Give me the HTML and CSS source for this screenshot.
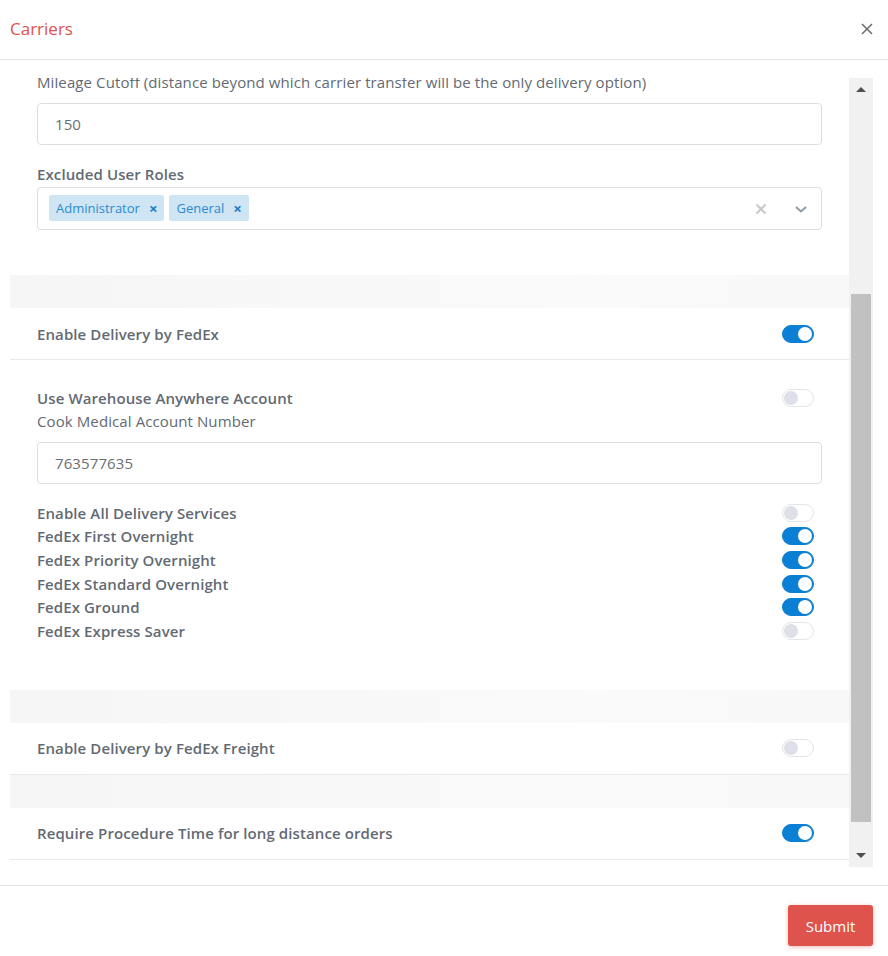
FILE: index.html
```html
<!DOCTYPE html>
<html>
<head>
<meta charset="utf-8">
<link rel="stylesheet" href="styles.css">
</head>
<body>
<div class="modal">
  <div class="modal-header">
    <h1 class="modal-title">Carriers</h1>
    <svg class="close-icon" width="12" height="12" viewBox="0 0 12 12"><path d="M1 1L11 11M11 1L1 11" stroke="#6b6b6b" stroke-width="1.5" fill="none"/></svg>
  </div>
  <div class="modal-body">
    <div class="scroll-view">
      <div class="scroll-content">
        <div class="section section-top">
          <div class="field-label">Mileage Cutoff (distance beyond which carrier transfer will be the only delivery option)</div>
          <div class="text-input">150</div>
          <div class="field-label bold spaced">Excluded User Roles</div>
          <div class="multi-select">
            <div class="tags">
              <span class="tag">Administrator <span class="tag-x">×</span></span>
              <span class="tag">General <span class="tag-x">×</span></span>
            </div>
            <div class="select-icons">
              <svg width="12" height="12" viewBox="0 0 12 12"><path d="M1.5 1.5L10.5 10.5M10.5 1.5L1.5 10.5" stroke="#c8c8c8" stroke-width="2" fill="none"/></svg>
              <svg width="14" height="10" viewBox="0 0 14 10"><path d="M2 3L7 7.5L12 3" stroke="#8d9ba6" stroke-width="2" fill="none"/></svg>
            </div>
          </div>
        </div>
        <div class="band"></div>
        <div class="row">
          <span class="row-label">Enable Delivery by FedEx</span>
          <span class="toggle on"></span>
        </div>
        <div class="section section-fedex">
          <div class="line">
            <span class="field-label bold">Use Warehouse Anywhere Account</span>
            <span class="toggle"></span>
          </div>
          <div class="field-label">Cook Medical Account Number</div>
          <div class="text-input">763577635</div>
          <div class="services">
            <div class="line"><span class="field-label bold">Enable All Delivery Services</span><span class="toggle"></span></div>
            <div class="line"><span class="field-label bold">FedEx First Overnight</span><span class="toggle on"></span></div>
            <div class="line"><span class="field-label bold">FedEx Priority Overnight</span><span class="toggle on"></span></div>
            <div class="line"><span class="field-label bold">FedEx Standard Overnight</span><span class="toggle on"></span></div>
            <div class="line"><span class="field-label bold">FedEx Ground</span><span class="toggle on"></span></div>
            <div class="line"><span class="field-label bold">FedEx Express Saver</span><span class="toggle"></span></div>
          </div>
        </div>
        <div class="band"></div>
        <div class="row">
          <span class="row-label">Enable Delivery by FedEx Freight</span>
          <span class="toggle"></span>
        </div>
        <div class="band"></div>
        <div class="row">
          <span class="row-label">Require Procedure Time for long distance orders</span>
          <span class="toggle on"></span>
        </div>
      </div>
    </div>
    <div class="scrollbar">
      <div class="sb-arrow up"></div>
      <div class="sb-track"><div class="sb-thumb"></div></div>
      <div class="sb-arrow down"></div>
    </div>
  </div>
  <div class="modal-footer">
    <button class="submit-btn">Submit</button>
  </div>
</div>
</body>
</html>
```
FILE: styles.css
```css
* { box-sizing: border-box; }
html, body { margin: 0; padding: 0; background: #fff; }
body {
  font-family: "Open Sans", "Lato", sans-serif;
  font-size: 15px;
  letter-spacing: 0.1px;
  color: #636a73;
}
.modal { width: 888px; height: 956px; display: flex; flex-direction: column; }
.modal-header {
  height: 60px;
  border-bottom: 1px solid #e4e4e4;
  display: flex;
  align-items: center;
  justify-content: space-between;
  padding: 0 15px 3px 10px;
}
.modal-title { margin: 0; font-size: 17px; font-weight: 400; letter-spacing: 0; color: #e0534b; }
.close-icon { margin-top: 1px; }
.modal-body {
  display: flex;
  margin: 18px 15px 0 10px;
  height: 789px;
}
.scroll-view { flex: 1; overflow: hidden; height: 789px; }
.scroll-content { margin-top: -7px; }
.section { padding: 0 27px; }
.field-label { line-height: 22px; color: #636a73; }
.field-label.bold, .row-label { font-weight: 600; }
.field-label.spaced { margin-top: 18px; }
.text-input {
  margin-top: 10px;
  height: 42px;
  border: 1px solid #dcdde0;
  border-radius: 4px;
  padding: 0 17px;
  display: flex;
  align-items: center;
  color: #6a6f75;
}
.multi-select {
  margin-top: 2px;
  height: 43px;
  border: 1px solid #dcdde0;
  border-radius: 4px;
  padding: 0 11px;
  display: flex;
  align-items: center;
  justify-content: space-between;
}
.tags { display: flex; gap: 5px; margin-top: -2px; }
.tag {
  background: #cfe5f4;
  color: #2b8ad0;
  font-size: 13px;
  letter-spacing: 0;
  height: 26px;
  line-height: 26px;
  padding: 0 7px 0 7px;
  border-radius: 2px;
  display: inline-flex;
  align-items: center;
}
.tag-x { font-weight: 700; margin-left: 9px; font-size: 15px; color: #1e7cc8; }
.select-icons { display: flex; align-items: center; gap: 27px; padding-right: 2px; }
.band {
  height: 33px;
  background: linear-gradient(to right, #f6f6f6, #fafafa 70%, #f8f8f8);
}
.section-top { padding-bottom: 45px; }
.row {
  height: 52px;
  border-bottom: 1px solid #e6e9ed;
  display: flex;
  align-items: center;
  justify-content: space-between;
  padding: 0 35px 0 27px;
}
.section-fedex { padding-top: 26px; padding-bottom: 47px; }
.section-fedex > .line { padding-right: 8px; }
.line {
  display: flex;
  align-items: center;
  justify-content: space-between;
  line-height: 24px;
  height: 24px;
}
.services { margin-top: 17px; padding-right: 8px; }
.services .line { height: 23.6px; line-height: 23.6px; }
.toggle {
  width: 32px;
  height: 18px;
  border-radius: 9px;
  border: 1px solid #e3e4e8;
  background: #fff;
  position: relative;
  flex: none;
}
.toggle::after {
  content: "";
  position: absolute;
  top: 1px;
  left: 1px;
  width: 14px;
  height: 14px;
  border-radius: 50%;
  background: #dde0e6;
}
.toggle.on { background: #0b7fd3; border-color: #0b7fd3; }
.toggle.on::after { left: auto; right: 1px; background: #fff; }
.scrollbar {
  width: 24px;
  background: #f1f1f1;
  display: flex;
  flex-direction: column;
}
.sb-arrow { height: 24px; position: relative; }
.sb-arrow::after {
  content: "";
  position: absolute;
  left: 7px;
  top: 9px;
  border-left: 5px solid transparent;
  border-right: 5px solid transparent;
}
.sb-arrow.up::after { border-bottom: 5px solid #505050; }
.sb-arrow.down::after { border-top: 5px solid #505050; top: 10px; }
.sb-track { flex: 1; padding: 0 2px; }
.sb-thumb { margin-top: 192px; height: 528px; background: #c1c1c1; }
.modal-footer {
  margin-top: 18px;
  border-top: 1px solid #e4e4e4;
  flex: 1;
  display: flex;
  justify-content: flex-end;
  align-items: flex-start;
  padding: 19px 15px 0 0;
}
.submit-btn {
  width: 85px;
  height: 41px;
  border: none;
  border-radius: 3px;
  background: #de544d;
  color: #fff;
  font-family: inherit;
  font-size: 15px;
  letter-spacing: 0;
  box-shadow: 0 1px 4px rgba(222,84,77,0.4);
}
```
